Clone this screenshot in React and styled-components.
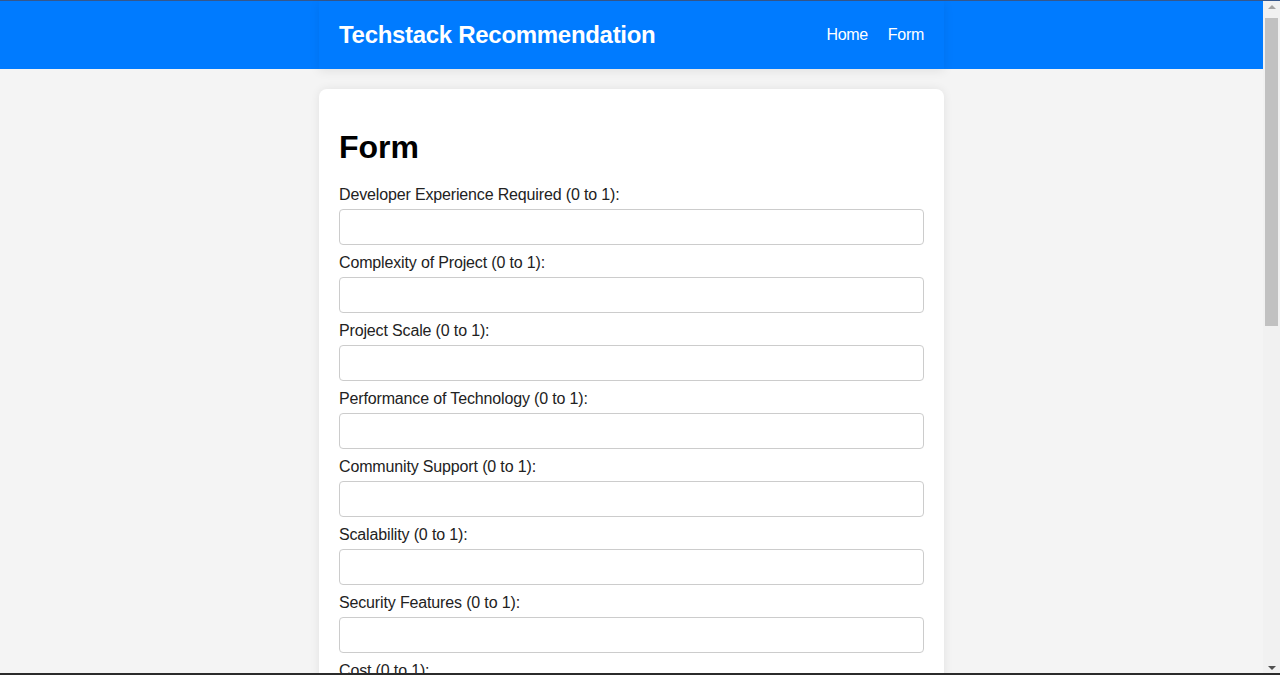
import React from "react";
import styled, { createGlobalStyle } from "styled-components";

const GlobalStyle = createGlobalStyle`
  html, body {
    margin: 0;
    padding: 0;
    background-color: #f4f4f4;
    font-family: "Liberation Sans", Arial, sans-serif;
  }
  body {
    padding-right: 17px;
  }
  * {
    box-sizing: border-box;
  }
`;

// fake window scrollbar, the headless browser hides the real one
const ScrollTrack = styled.div`
  position: fixed;
  top: 0;
  right: 0;
  width: 17px;
  height: 100vh;
  background-color: #f1f1f1;
  border-top: 1px solid #35578c;
  display: flex;
  flex-direction: column;
  align-items: center;
  justify-content: space-between;
  padding: 4px 0 5px;
`;

const ScrollArrow = styled.div`
  width: 0;
  height: 0;
  border-left: 4px solid transparent;
  border-right: 4px solid transparent;
  ${(p) =>
    p.down
      ? "border-top: 4px solid #505050;"
      : "border-bottom: 4px solid #a3a3a3;"}
`;

const ScrollThumb = styled.div`
  position: absolute;
  top: 17px;
  left: 2px;
  width: 13px;
  height: 308px;
  background-color: #c1c1c1;
`;

const WindowEdge = styled.div`
  position: fixed;
  left: 0;
  right: 0;
  bottom: 0;
  height: 2px;
  background-color: #2b2b2b;
`;

const HeaderBar = styled.header`
  background-color: #007bff;
  border-top: 1px solid #35578c;
  height: 69px;
`;

const HeaderInner = styled.div`
  width: 625px;
  height: 68px;
  margin: 0 auto;
  padding: 0 20px;
  display: flex;
  align-items: center;
  justify-content: space-between;
  box-shadow: 0 2px 10px rgba(0, 0, 0, 0.08);
`;

const Title = styled.h1`
  margin: 0;
  color: #fff;
  font-size: 24px;
  font-weight: bold;
  letter-spacing: -0.3px;
`;

const Nav = styled.nav`
  display: flex;
  gap: 20px;
`;

const NavLink = styled.a`
  color: #fff;
  font-size: 16px;
  letter-spacing: -0.3px;
  text-decoration: none;
  cursor: pointer;
`;

const Card = styled.main`
  width: 625px;
  margin: 20px auto;
  padding: 20px;
  background-color: #fff;
  border-radius: 8px;
  box-shadow: 0 0 10px rgba(0, 0, 0, 0.08);
`;

const Heading = styled.h2`
  margin: 20px 0 20px;
  font-size: 32px;
  font-weight: bold;
  color: #000;
`;

const Field = styled.div`
  display: flex;
  flex-direction: column;
  margin-bottom: 9px;
`;

const Label = styled.label`
  font-size: 16px;
  color: #222;
  margin-bottom: 5px;
  letter-spacing: -0.15px;
`;

const Input = styled.input`
  height: 36px;
  width: 100%;
  padding: 8px;
  font-size: 16px;
  font-family: inherit;
  border: 1px solid #ccc;
  border-radius: 4px;
  background: #fff;
`;

const SubmitButton = styled.button`
  margin-top: 10px;
  padding: 10px 20px;
  background-color: #007bff;
  color: #fff;
  border: none;
  border-radius: 4px;
  font-size: 16px;
  font-family: inherit;
  cursor: pointer;
`;

const fields = [
  "Developer Experience Required",
  "Complexity of Project",
  "Project Scale",
  "Performance of Technology",
  "Community Support",
  "Scalability",
  "Security Features",
  "Cost",
  "Learning Curve",
  "Documentation Quality",
  "Ecosystem and Libraries",
  "Integration Capabilities",
  "Development Speed",
  "Maintainability",
  "Popularity",
  "Cross-Platform Support",
];

const App = () => {
  return (
    <>
      <GlobalStyle />
      <HeaderBar>
        <HeaderInner>
          <Title>Techstack Recommendation</Title>
          <Nav>
            <NavLink>Home</NavLink>
            <NavLink>Form</NavLink>
          </Nav>
        </HeaderInner>
      </HeaderBar>
      <Card>
        <Heading>Form</Heading>
        <form onSubmit={(e) => e.preventDefault()}>
          {fields.map((name, index) => (
            <Field key={index}>
              <Label htmlFor={"f" + index}>{name} (0 to 1):</Label>
              <Input id={"f" + index} type="text" />
            </Field>
          ))}
          <SubmitButton type="submit">Submit</SubmitButton>
        </form>
      </Card>
      <ScrollTrack>
        <ScrollArrow />
        <ScrollThumb />
        <ScrollArrow down />
      </ScrollTrack>
      <WindowEdge />
    </>
  );
};

export default App;
